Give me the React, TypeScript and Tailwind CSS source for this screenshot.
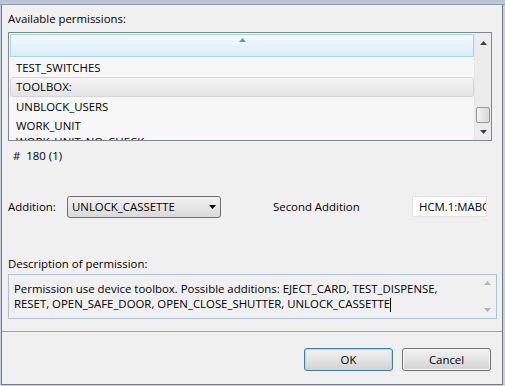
import React from 'react';

const items = ['TEST_SWITCHES', 'TOOLBOX:', 'UNBLOCK_USERS', 'WORK_UNIT'];

// small scrollbar arrow glyphs
const UpArrow = ({ color = '#404040' }: { color?: string }) => (
  <svg width="7" height="4" viewBox="0 0 7 4">
    <path d="M0 4 L3.5 0 L7 4 Z" fill={color} />
  </svg>
);

const DownArrow = ({ color = '#404040' }: { color?: string }) => (
  <svg width="7" height="4" viewBox="0 0 7 4">
    <path d="M0 0 L7 0 L3.5 4 Z" fill={color} />
  </svg>
);

function PermissionList() {
  return (
    <div className="ml-[6px] w-[484px] h-[109px] border border-[#828790] bg-[#f7f7f7] flex overflow-hidden">
      <div className="flex-1 flex flex-col pl-[1px] pt-[1px] overflow-hidden">
        {/* "more items above" row */}
        <div className="h-[23px] shrink-0 border border-[#9fd8f3] bg-gradient-to-b from-[#f4f9fd] to-[#dcedf9] flex justify-center pt-[3px]">
          <UpArrow color="#6f93b0" />
        </div>
        <div className="h-[1px] shrink-0" />
        {items.map((it) =>
          it === 'TOOLBOX:' ? (
            <div
              key={it}
              className="h-[20px] shrink-0 rounded-[3px] border border-[#d5d5d5] bg-gradient-to-b from-[#f6f6f6] to-[#e4e4e4] flex items-center pl-[5px]"
            >
              {it}
            </div>
          ) : (
            <div key={it} className="h-[19px] shrink-0 flex items-center pl-[6px]">
              {it}
            </div>
          ),
        )}
        {/* partly visible row at the bottom */}
        <div className="h-[19px] shrink-0 pl-[6px] pt-[1px]">WORK_UNIT_NO_CHECK</div>
      </div>
      {/* vertical scrollbar */}
      <div className="w-[17px] shrink-0 bg-[#ececec] border-l border-[#e6e6e6] flex flex-col items-center">
        <div className="h-[17px] flex items-center justify-center mt-[1px]">
          <UpArrow />
        </div>
        <div className="flex-1" />
        <div className="w-[14px] h-[16px] rounded-[2px] border border-[#979797] bg-gradient-to-r from-[#f3f3f3] to-[#d8d8d8]" />
        <div className="h-[17px] flex items-center justify-center">
          <DownArrow />
        </div>
      </div>
    </div>
  );
}

function Button({ label, focused }: { label: string; focused?: boolean }) {
  return (
    <div
      className={
        focused
          ? 'w-[89px] h-[23px] rounded-[3px] border border-[#3c7fb1] shadow-[inset_0_0_0_1px_#a9dcf6] bg-gradient-to-b from-[#f2f2f2] via-[#e4e4e4] to-[#d2d2d2] flex items-center justify-center'
          : 'w-[89px] h-[23px] rounded-[3px] border border-[#707070] shadow-[inset_0_0_0_1px_#fbfbfb] bg-gradient-to-b from-[#f2f2f2] via-[#e4e4e4] to-[#d2d2d2] flex items-center justify-center'
      }
    >
      {label}
    </div>
  );
}

export default function App() {
  return (
    <div className="w-[505px] h-[386px] overflow-hidden bg-[#c8d2de] flex flex-col font-['Segoe_UI','Open_Sans',sans-serif] text-[11.4px] leading-none text-black">
      {/* window frame top edge */}
      <div className="h-[5px] shrink-0 bg-gradient-to-b from-[#b3bfcf] to-[#c3ccd9] border-b border-[#8e9aab]" />
      <div className="flex-1 flex flex-col bg-[#f0f0f0] ml-[1px] mr-[2px] mb-[1px] border-l border-r border-b border-[#707a88]">
        <div className="pt-[8px] pl-[6px] h-[27px]">Available permissions:</div>
        <PermissionList />
        <div className="pl-[11px] pt-[9px] h-[28px] whitespace-pre">{'#  180 (1)'}</div>

        <div className="mt-[26px] flex items-center pl-[6px] h-[23px]">
          <span className="w-[59px]">Addition:</span>
          <div className="w-[154px] h-[22px] rounded-[3px] border border-[#707070] bg-gradient-to-b from-[#f2f2f2] via-[#e6e6e6] to-[#d9d9d9] flex items-center pl-[4px] pr-[4px]">
            <span className="flex-1">UNLOCK_CASSETTE</span>
            <DownArrow color="#000" />
          </div>
          <span className="ml-[52px] w-[139px]">Second Addition</span>
          <div className="w-[75px] h-[21px] bg-white border border-[#e3e3e3] flex items-center pl-[6px] overflow-hidden whitespace-nowrap">
            HCM.1:MABC
          </div>
        </div>

        <div className="mt-[40px] pl-[6px] h-[16px]">Description of permission:</div>
        <div className="ml-[6px] w-[489px] h-[45px] border border-[#abc1d6] bg-[#f0f0f0] flex">
          <div className="flex-1 pl-[5px] pt-[6px] leading-[15px]">
            Permission use device toolbox. Possible additions: EJECT_CARD, TEST_DISPENSE,
            <br />
            RESET, OPEN_SAFE_DOOR, OPEN_CLOSE_SHUTTER, UNLOCK_CASSETTE
            <span className="inline-block w-[1px] h-[14px] bg-black align-middle" />
          </div>
          <div className="w-[17px] flex flex-col items-center justify-between py-[6px]">
            <UpArrow color="#b4b4b4" />
            <DownArrow color="#b4b4b4" />
          </div>
        </div>

        <div className="mt-[12px] border-t border-[#a0a0a0] flex-1 flex justify-end items-start pt-[16px] pr-[11px] gap-[9px]">
          <Button label="OK" focused />
          <Button label="Cancel" />
        </div>
      </div>
    </div>
  );
}
